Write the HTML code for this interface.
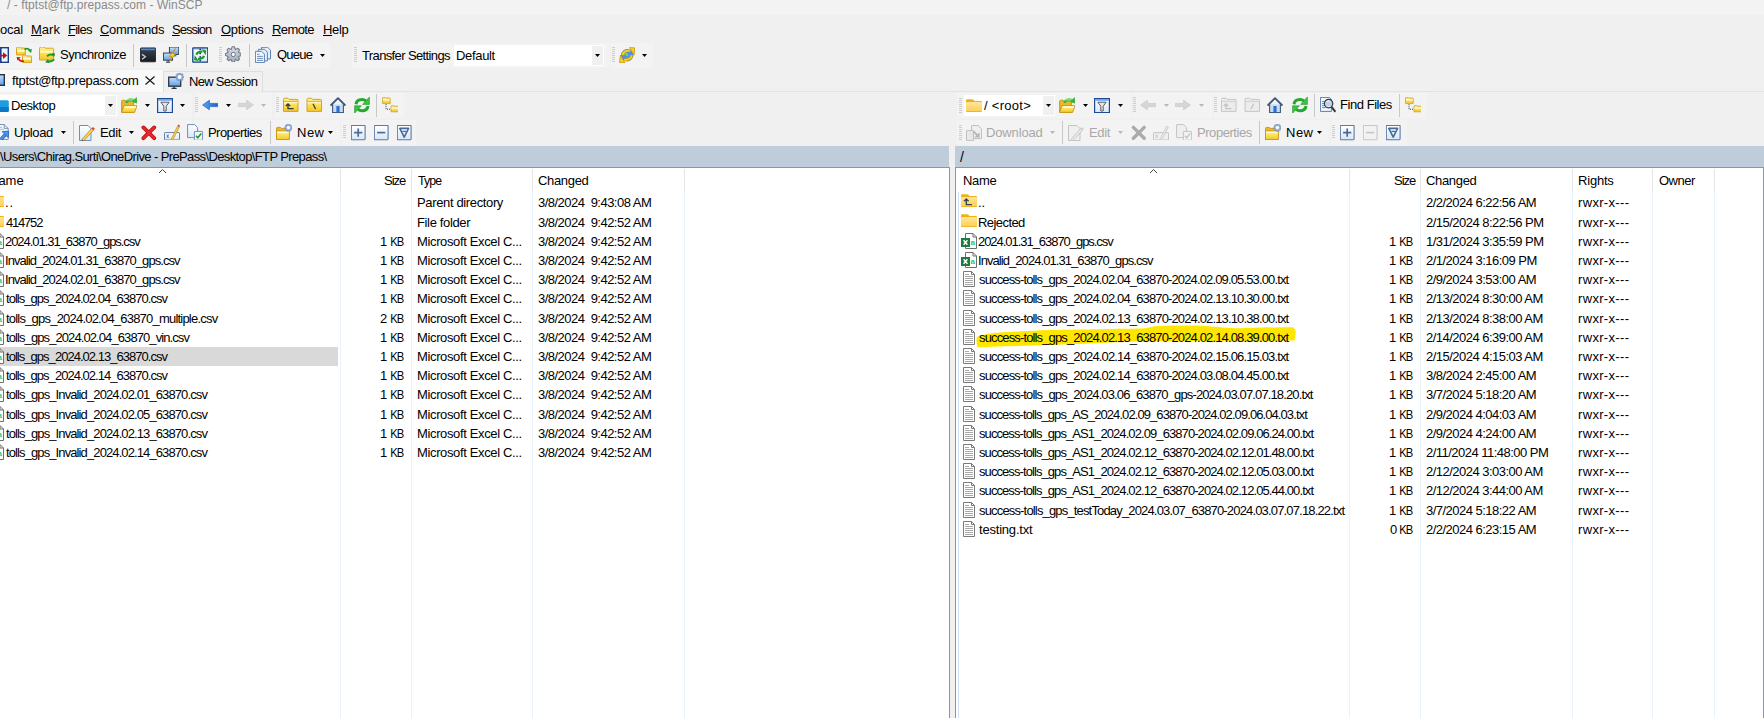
<!DOCTYPE html>
<html><head><meta charset="utf-8"><title>WinSCP</title>
<style>
html,body{margin:0;padding:0;width:1764px;height:718px;overflow:hidden;background:#f0f0f0}
body{position:relative;font-family:"Liberation Sans",sans-serif;font-size:13px;color:#000}
.b{position:absolute}
.i{position:absolute;overflow:visible}
.t{position:absolute;white-space:pre;line-height:14px;letter-spacing:-0.5px}
.r{text-align:right}
.title{color:#8a8a8a}
.menu u{text-decoration:underline;text-underline-offset:1px;text-decoration-thickness:1px}
.dis{color:#a8a8a8}
.nm{letter-spacing:-0.83px}
.dt{letter-spacing:-0.52px}
.ty{letter-spacing:-0.36px}
.rt{letter-spacing:0.33px}
.sz{letter-spacing:-1.4px}
.grip{background:repeating-linear-gradient(to bottom,#cdcdcd 0,#cdcdcd 1px,transparent 1px,transparent 2px)}
</style></head><body>
<svg width="0" height="0" style="position:absolute"><defs>
<linearGradient id="gFold" x1="0" y1="0" x2="0" y2="1"><stop offset="0" stop-color="#ffe69a"/><stop offset="1" stop-color="#fccf52"/></linearGradient>
<linearGradient id="gGold" x1="0" y1="0" x2="0" y2="1"><stop offset="0" stop-color="#fff3a0"/><stop offset="0.45" stop-color="#fde25a"/><stop offset="1" stop-color="#f3c72c"/></linearGradient>
<linearGradient id="gMon" x1="0" y1="0" x2="0" y2="1"><stop offset="0" stop-color="#c8e0fa"/><stop offset="1" stop-color="#5f9fea"/></linearGradient>
<linearGradient id="gTerm" x1="0" y1="0" x2="0" y2="1"><stop offset="0" stop-color="#3a434e"/><stop offset="1" stop-color="#181c22"/></linearGradient>
<linearGradient id="gBlue" x1="0" y1="0" x2="1" y2="0"><stop offset="0" stop-color="#5aa6f4"/><stop offset="1" stop-color="#1d5fc4"/></linearGradient>
<linearGradient id="gGreen" x1="0" y1="0" x2="0" y2="1"><stop offset="0" stop-color="#7ee07a"/><stop offset="1" stop-color="#1fa52a"/></linearGradient>
<linearGradient id="gPane" x1="0" y1="0" x2="0" y2="1"><stop offset="0" stop-color="#ffffff"/><stop offset="1" stop-color="#d9e7f7"/></linearGradient>
<linearGradient id="gGear" x1="0" y1="0" x2="0" y2="1"><stop offset="0" stop-color="#d4dae2"/><stop offset="1" stop-color="#a3acb8"/></linearGradient>

<symbol id="ic_folder" viewBox="0 0 16 16"><path d="M0 2.2Q0 1.2 1 1.2H6.2Q6.9 1.2 7.4 1.8L8.4 3H15Q16 3 16 4V13Q16 14 15 14H1Q0 14 0 13Z" fill="#f2b10d"/><rect x="0" y="4" width="16" height="10" rx="1" fill="url(#gFold)"/><rect x="0.5" y="13" width="15" height="1" rx="0.5" fill="#f0b52a"/></symbol>
<symbol id="ic_folderup" viewBox="0 0 16 16"><path d="M0 2.2Q0 1.2 1 1.2H6.2Q6.9 1.2 7.4 1.8L8.4 3H15Q16 3 16 4V13Q16 14 15 14H1Q0 14 0 13Z" fill="#f2b10d"/><rect x="0" y="4" width="16" height="10" rx="1" fill="url(#gFold)"/><rect x="0.5" y="13" width="15" height="1" rx="0.5" fill="#f0b52a"/><path d="M3 8.2L5.3 6L7.6 8.2M5.3 6.5V11.6H11" stroke="#3a4455" stroke-width="1.4" fill="none"/></symbol>
<symbol id="ic_xls" viewBox="0 0 16 16"><path d="M4.5 0.5h7.5l3.5 3.5v11.5h-11z" fill="#fff" stroke="#6e6e6e"/><path d="M12 0.5v3.5h3.5" fill="none" stroke="#6e6e6e"/><text x="9.4" y="12" font-family="Liberation Sans" font-size="8" font-weight="bold" fill="#2cc46e">a</text><rect x="0" y="5" width="9" height="9" fill="#1e7a43"/><path d="M2.6 7.2l3.8 4.6M6.4 7.2l-3.8 4.6" stroke="#fff" stroke-width="1.4"/></symbol>
<symbol id="ic_lcsv" viewBox="0 0 16 16"><path d="M4.5 0.5h7.5l3.5 3.5v11.5h-11z" fill="#fff" stroke="#6e6e6e"/><path d="M12 0.5v3.5h3.5" fill="none" stroke="#6e6e6e"/><text x="9.4" y="12" font-family="Liberation Sans" font-size="8" font-weight="bold" fill="#2cc46e">a</text><rect x="0" y="5" width="9" height="9" fill="#1e7a43"/></symbol>
<symbol id="ic_txt" viewBox="0 0 16 16"><path d="M2.5 0.5h8l3 3v12h-11z" fill="#fff" stroke="#7a7a7a"/><path d="M10.5 0.5v3h3" fill="none" stroke="#7a7a7a"/><path d="M4 3.5h4M4 5.5h8M4 7.5h8M4 9.5h8M4 11.5h8M4 13.5h8" stroke="#a8a8a8"/></symbol>

<symbol id="ic_cmp" viewBox="0 0 16 16"><rect x="-2" y="0.7" width="17.3" height="14.6" fill="#eef6fe" stroke="#1c3d85" stroke-width="1.4"/><rect x="7" y="0" width="1.6" height="16" fill="#1c3d85"/><path d="M0 8.6h11" stroke="#c0101e" stroke-width="1.6"/><path d="M10 5.2l4.3 3.4-4.3 3.4z" fill="#c0101e"/></symbol>
<symbol id="ic_synccmp" viewBox="0 0 16 16"><path d="M0.5 1.5Q0.5 0 2 0H3.5L4.5 1H8.5Q9.3 1 9.3 1.8V8H0.5Z" fill="url(#gGold)" stroke="#cf9d18" stroke-width="0.9"/><rect x="1.2" y="3.2" width="7.4" height="1.5" fill="#fffbd8"/><path d="M6.5 9.3Q6.5 8 8 8H9.5L10.5 9H14.8Q15.6 9 15.6 9.8V15.6H6.5Z" fill="url(#gGold)" stroke="#cf9d18" stroke-width="0.9"/><rect x="7.2" y="11" width="7.6" height="1.5" fill="#fffbd8"/><path d="M8.5 2.5Q11.5 0.5 13.8 3.2" stroke="#1f9a2a" stroke-width="1.7" fill="none"/><path d="M12 3.6L15.8 1.8L15.2 6Z" fill="#1f9a2a"/><path d="M8 14.2Q4 14.5 2.6 11.8" stroke="#d81818" stroke-width="1.7" fill="none"/><path d="M0.6 10L4.6 10.2L1.4 13.4Z" fill="#d81818"/></symbol>
<symbol id="ic_sync" viewBox="0 0 16 16"><path d="M0.5 1.5Q0.5 0 2 0H5L6.2 1.2H13.6Q14.6 1.2 14.6 2.2V13H0.5Z" fill="url(#gGold)" stroke="#cf9d18" stroke-width="0.9"/><rect x="1.2" y="4" width="12.6" height="1.6" fill="#fffbd8"/><path d="M8 9.2Q11 6.3 14.6 8.2" stroke="#1f9a2a" stroke-width="1.9" fill="none"/><path d="M13 6L17 6.6L14.6 10.2Z" fill="#1f9a2a"/><path d="M15.2 12.4Q12.4 15.6 8.6 14" stroke="#1f9a2a" stroke-width="1.9" fill="none"/><path d="M10.4 16L6.2 15.4L8.6 12Z" fill="#1f9a2a"/></symbol>
<symbol id="ic_term" viewBox="0 0 16 16"><rect x="0.5" y="0.9" width="15.2" height="13.9" rx="0.8" fill="url(#gTerm)" stroke="#15181c" stroke-width="0.8"/><rect x="1.2" y="1.6" width="13.8" height="1.6" fill="#3f90ea"/><path d="M2 7.4l3.4 2.4L2 12.2" stroke="#c9ced4" stroke-width="1.3" fill="none"/></symbol>
<symbol id="ic_putty" viewBox="0 0 16 16"><rect x="6.4" y="0" width="9.4" height="7.4" fill="url(#gMon)" stroke="#2c333d" stroke-width="0.9"/><path d="M10 8.8h3.4" stroke="#2c333d" stroke-width="1"/><rect x="0.4" y="6" width="9.2" height="7.2" fill="url(#gMon)" stroke="#2c333d" stroke-width="0.9"/><path d="M3 15.2h4.2M5.1 13.2v2" stroke="#2c333d" stroke-width="1"/><path d="M12.4 1.4L6.2 9.4H9L6.4 14.6L12.6 6.8H9.8Z" fill="#f6d23a" stroke="#b88c12" stroke-width="0.7"/></symbol>
<symbol id="ic_syncbrowse" viewBox="0 0 16 16"><rect x="0.8" y="1" width="15" height="14.2" rx="0.5" fill="url(#gPane)" stroke="#15428b" stroke-width="1.3"/><path d="M1.5 2.2H15" stroke="#9cc0ef" stroke-width="1"/><circle cx="8.2" cy="2.4" r="0.9" fill="#15428b"/><circle cx="8.2" cy="6.4" r="0.9" fill="#15428b"/><circle cx="8.2" cy="10" r="0.9" fill="#15428b"/><circle cx="8.2" cy="13.6" r="0.9" fill="#15428b"/><path d="M4.4 7.6Q5.6 4.4 10.4 4.6" stroke="#1e9a28" stroke-width="2.2" fill="none"/><path d="M9.6 2.2L14.4 3.4L13.6 8.2Z" fill="#1e9a28"/><path d="M12 8.8Q10.8 12 6 11.8" stroke="#1e9a28" stroke-width="2.2" fill="none"/><path d="M6.8 14.2L2 13L2.8 8.2Z" fill="#1e9a28"/></symbol>
<symbol id="ic_gear" viewBox="0 0 16 16"><path d="M6.29 3.27 L7.21 0.78 L9.39 0.78 L10.31 3.27 L10.58 3.38 L12.99 2.27 L14.53 3.81 L13.42 6.22 L13.53 6.49 L16.02 7.41 L16.02 9.59 L13.53 10.51 L13.42 10.78 L14.53 13.19 L12.99 14.73 L10.58 13.62 L10.31 13.73 L9.39 16.22 L7.21 16.22 L6.29 13.73 L6.02 13.62 L3.61 14.73 L2.07 13.19 L3.18 10.78 L3.07 10.51 L0.58 9.59 L0.58 7.41 L3.07 6.49 L3.18 6.22 L2.07 3.81 L3.61 2.27 L6.02 3.38Z" fill="url(#gGear)" stroke="#717c8a" stroke-width="1.1" stroke-linejoin="round"/><circle cx="8.3" cy="8.5" r="2.1" fill="#fbfbfb" stroke="#6a7482" stroke-width="1"/></symbol>
<symbol id="ic_queue" viewBox="0 0 16 16"><path d="M6.5 0.3h6.2l2.8 2.8v8.8h-9z" fill="#e7eef8" stroke="#5b82b5"/><path d="M3.4 2.3h6.2l2.8 2.8v8.8h-9z" fill="#e7eef8" stroke="#5b82b5"/><path d="M0.4 4.3h6.2l2.8 2.8v8.5h-9z" fill="#f3f7fc" stroke="#5b82b5"/><path d="M2 7.2h2.5M2 9.4h5.8M2 11.4h5.8M2 13.4h5.8" stroke="#5b82b5" stroke-width="0.9"/></symbol>
<symbol id="ic_web" viewBox="0 0 16 16"><circle cx="8.2" cy="8.2" r="5.8" fill="#4896ea" stroke="#2a74c4" stroke-width="0.6"/><path d="M4.6 7.6Q5.8 6 7.6 7Q8.4 7.8 7.8 9.2M10.6 9.4Q12 8.8 12.6 10.6" stroke="#74d36a" stroke-width="1.9" fill="none"/><g id="wArr"><path d="M3.6 8Q4.6 3.2 11.2 3.6" stroke="#c8920a" stroke-width="2.8" fill="none"/><path d="M3.6 8Q4.6 3.2 11.2 3.6" stroke="#f8d030" stroke-width="1.7" fill="none"/><path d="M10.6 0.6L15.8 0.9L15 8.2Z" fill="#f8d030" stroke="#c8920a" stroke-width="0.8" stroke-linejoin="round"/></g><use href="#wArr" transform="rotate(180 8.2 8.2)"/></symbol>
<symbol id="ic_monitor" viewBox="0 0 16 16"><rect x="0.7" y="1.7" width="14.6" height="10.6" fill="url(#gMon)" stroke="#2a3240" stroke-width="1.4"/><path d="M5.5 14.6h5M8 12.5v2" stroke="#2a3240" stroke-width="1.4"/></symbol>
<symbol id="ic_newsess" viewBox="0 0 16 16"><rect x="0.7" y="4.2" width="12" height="9" fill="url(#gMon)" stroke="#2a3240" stroke-width="1.3"/><path d="M3.6 15.4h5M6.1 13.4v2" stroke="#2a3240" stroke-width="1.3"/><g transform="translate(11.6 4)"><path d="M-0.8-4H0.8L1.2-2.4 2.6-3.4 3.6-2.2 2.6-0.9 4 -0.5V1L2.6 1.3 3.4 2.8 2.2 3.8 1 2.6 0.8 4H-0.8L-1.1 2.6-2.4 3.6-3.6 2.4-2.6 1.2-4 0.8V-0.8L-2.6-1.1-3.4-2.4-2.2-3.6-1.1-2.6Z" fill="#8eaad0" stroke="#5f7fae" stroke-width="0.5"/><circle r="2" fill="#fff"/></g></symbol>
<symbol id="ic_desktop" viewBox="0 0 16 16"><rect x="3.8" y="3.3" width="12" height="11.6" rx="1.6" fill="#1e9ce0"/><rect x="3.8" y="10" width="12" height="4.9" rx="1" fill="#0d79c6"/></symbol>
<symbol id="ic_open" viewBox="0 0 16 16"><path d="M0.6 4.2Q0.6 3.2 1.6 3.2H4L5 4.2H12.6V15.2H0.6Z" fill="#e9b72c" stroke="#c99212" stroke-width="0.9"/><path d="M3 8.6H16L13.6 15.4H0.6Z" fill="url(#gGold)" stroke="#c99212" stroke-width="0.9"/><rect x="3.6" y="9.2" width="11.4" height="1.6" fill="#fffbd8"/><path d="M5 5.6Q8.5 0.8 13.2 3.2" stroke="url(#gGreen)" stroke-width="2.6" fill="none"/><path d="M15.8 0L16 6.6L10.8 4.8Z" fill="#36b23a"/></symbol>
<symbol id="ic_filter" viewBox="0 0 16 16"><rect x="0.6" y="1.6" width="14.8" height="14" fill="url(#gPane)" stroke="#1c4a94" stroke-width="1.2"/><rect x="1.2" y="2.2" width="13.6" height="1.5" fill="#5e96e0"/><path d="M3.8 5.2H12.2L9.2 9.2V14H6.8V9.2Z" fill="#e6e6e6" stroke="#5a5e64" stroke-width="1"/></symbol>
<symbol id="ic_back" viewBox="0 0 16 16"><path d="M0.6 8L7.4 3.2V6.4H15.8V9.6H7.4V12.8Z" fill="url(#gBlue)" stroke="#1f5fbf" stroke-width="0.7" stroke-linejoin="round"/></symbol>
<symbol id="ic_back_dis" viewBox="0 0 16 16"><path d="M0.6 8L7.4 3.2V6.4H15.8V9.6H7.4V12.8Z" fill="#d6d6d6" stroke="#cacaca" stroke-width="0.7" stroke-linejoin="round"/></symbol>
<symbol id="ic_fwd_dis" viewBox="0 0 16 16"><path d="M15.4 8L8.6 3.2V6.4H0.2V9.6H8.6V12.8Z" fill="#d6d6d6" stroke="#cacaca" stroke-width="0.7" stroke-linejoin="round"/></symbol>
<symbol id="ic_parent" viewBox="0 0 16 16"><path d="M0.5 2.5Q0.5 1.2 1.8 1.2H5L6.2 2.4H14Q15 2.4 15 3.4V14.4H0.5Z" fill="url(#gGold)" stroke="#cf9818" stroke-width="0.9"/><path d="M1 4.4H14.5" stroke="#cf9818" stroke-width="0.8"/><rect x="1" y="4.9" width="13.5" height="1.4" fill="#fff6c0"/><path d="M2.8 9L5 7L7.2 9M5 7.6V11.6H10.6" stroke="#2e3a4a" stroke-width="1.3" fill="none"/></symbol>
<symbol id="ic_parent_dis" viewBox="0 0 16 16"><path d="M0.5 2.5Q0.5 1.2 1.8 1.2H5L6.2 2.4H14Q15 2.4 15 3.4V14.4H0.5Z" fill="#ececec" stroke="#c2c2c2" stroke-width="0.9"/><path d="M1 4.4H14.5" stroke="#c8c8c8" stroke-width="0.8"/><path d="M2.8 9L5 7L7.2 9M5 7.6V11.6H10.6" stroke="#c4c4c4" stroke-width="1.3" fill="none"/></symbol>
<symbol id="ic_root" viewBox="0 0 16 16"><path d="M1 2.5Q1 1.2 2.3 1.2H5.5L6.7 2.4H14.5Q15.5 2.4 15.5 3.4V14.4H1Z" fill="url(#gGold)" stroke="#cf9818" stroke-width="0.9"/><path d="M1.5 4.4H15" stroke="#cf9818" stroke-width="0.8"/><rect x="1.5" y="4.9" width="13.5" height="1.4" fill="#fff6c0"/><path d="M7 6.8L9.6 12" stroke="#3a3f46" stroke-width="1.3"/></symbol>
<symbol id="ic_root_dis" viewBox="0 0 16 16"><path d="M1 2.5Q1 1.2 2.3 1.2H5.5L6.7 2.4H14.5Q15.5 2.4 15.5 3.4V14.4H1Z" fill="#ececec" stroke="#c2c2c2" stroke-width="0.9"/><path d="M1.5 4.4H15" stroke="#c8c8c8" stroke-width="0.8"/><path d="M9.6 6.8L7 12" stroke="#c4c4c4" stroke-width="1.3"/></symbol>
<symbol id="ic_home" viewBox="0 0 16 16"><path d="M2.6 7.4V15.6H13.4V7.4" fill="#c9dcf2" stroke="#3f5878" stroke-width="1.1"/><path d="M0.6 8.6L8 1.2L15.4 8.6" stroke="#3f5878" stroke-width="1.9" fill="none" stroke-linejoin="round"/><rect x="6.4" y="9" width="3.2" height="6.4" fill="#2b6fd6"/></symbol>
<symbol id="ic_refresh" viewBox="0 0 16 16"><path d="M2 7.2Q2.6 2.4 8 2.4Q10.4 2.4 12 4" stroke="#24a82e" stroke-width="3" fill="none"/><path d="M15.4 0V7.4H8.6Z" fill="#3cc440" stroke="#1d9426" stroke-width="0.6"/><path d="M14 9Q13.4 13.8 8 13.8Q5.6 13.8 4 12.2" stroke="#24a82e" stroke-width="3" fill="none"/><path d="M0.6 16.2V8.8H7.4Z" fill="#3cc440" stroke="#1d9426" stroke-width="0.6"/></symbol>
<symbol id="ic_tree" viewBox="0 0 16 16"><path d="M0.6 1Q0.6 0.4 1.2 0.4H3.2L3.8 1H7.6Q8.2 1 8.2 1.6V6.6H0.6Z" fill="url(#gGold)" stroke="#c9a020" stroke-width="0.8"/><rect x="1" y="2.4" width="6.8" height="1.2" fill="#fffbd8"/><path d="M9 9.2Q9 8.6 9.6 8.6H11.6L12.2 9.2H16Q16.6 9.2 16.6 9.8V14.8H9Z" fill="url(#gGold)" stroke="#c9a020" stroke-width="0.8"/><rect x="9.4" y="10.6" width="6.8" height="1.2" fill="#fffbd8"/><path d="M4 7.2V12.2H9" stroke="#2a2a2a" stroke-width="0.9" stroke-dasharray="1 1" fill="none"/></symbol>
<symbol id="ic_upload" viewBox="0 0 16 16"><path d="M3.4 0.5H11.2L15.2 4.4V15.5H3.4Z" fill="#f2f6fb" stroke="#7b96b8"/><path d="M11.2 0.5V4.4H15.2" fill="none" stroke="#7b96b8"/><path d="M5 3.4h4M5 5.4h6" stroke="#a9bbd2" stroke-width="0.9"/><path d="M6.8 16.4L12.4 10.8" stroke="#1c5fbf" stroke-width="3.4"/><path d="M6.8 16.4L12.4 10.8" stroke="#4a94ec" stroke-width="2"/><path d="M9.2 7.6L15.6 7.2L15.2 13.6Z" fill="#4a94ec" stroke="#1c5fbf" stroke-width="0.8" stroke-linejoin="round"/></symbol>
<symbol id="ic_edit" viewBox="0 0 16 16"><path d="M0.5 0.5H9L12 3.5V15.5H0.5Z" fill="url(#gPane)" stroke="#6f8fb8"/><path d="M3.2 14.2L12.6 3.4L14.6 5.2L5 15.6L2.8 16Z" fill="#f7cf48" stroke="#b8841a" stroke-width="0.7"/><path d="M12.6 3.4L13.8 2L15.8 3.8L14.6 5.2Z" fill="#e03a3a"/><path d="M2.8 16L3.4 14.4L4.4 15.4Z" fill="#333"/></symbol>
<symbol id="ic_edit_dis" viewBox="0 0 16 16"><path d="M0.5 0.5H9L12 3.5V15.5H0.5Z" fill="#efefef" stroke="#c4c4c4"/><path d="M3.2 14.2L12.6 3.4L14.6 5.2L5 15.6L2.8 16Z" fill="#e6e6e6" stroke="#bdbdbd" stroke-width="0.7"/><path d="M12.6 3.4L13.8 2L15.8 3.8L14.6 5.2Z" fill="#d0d0d0"/></symbol>
<symbol id="ic_del" viewBox="0 0 16 16"><path d="M2.4 2.4L13.2 13.2M13.2 2.4L2.4 13.2" stroke="#b40e0e" stroke-width="3.8" stroke-linecap="round"/><path d="M2.4 2.4L13.2 13.2M13.2 2.4L2.4 13.2" stroke="#e82828" stroke-width="2.4" stroke-linecap="round"/></symbol>
<symbol id="ic_del_dis" viewBox="0 0 16 16"><path d="M2.4 2.4L13.2 13.2M13.2 2.4L2.4 13.2" stroke="#ababab" stroke-width="3.4" stroke-linecap="round"/></symbol>
<symbol id="ic_rename" viewBox="0 0 16 16"><rect x="0.5" y="8.6" width="15" height="7.4" rx="0.6" fill="url(#gPane)" stroke="#5b7fae"/><path d="M2.8 10.6L4.6 13.8M4.6 10.6L2.8 13.8" stroke="#4a6a9a" stroke-width="0.9"/><path d="M7.2 15L13.6 2L15.4 3L9 15.6L7 16.4Z" fill="#f7cf48" stroke="#b8841a" stroke-width="0.6"/><path d="M13.6 2L14.2 0.6L16 1.6L15.4 3Z" fill="#e03a3a"/></symbol>
<symbol id="ic_rename_dis" viewBox="0 0 16 16"><rect x="0.5" y="8.6" width="15" height="7.4" rx="0.6" fill="#efefef" stroke="#c4c4c4"/><path d="M2.8 10.6L4.6 13.8M4.6 10.6L2.8 13.8" stroke="#c4c4c4" stroke-width="0.9"/><path d="M7.2 15L13.6 2L15.4 3L9 15.6L7 16.4Z" fill="#e8e8e8" stroke="#c0c0c0" stroke-width="0.6"/></symbol>
<symbol id="ic_props" viewBox="0 0 16 16"><path d="M0.6 0.6H7.6L10.6 3.6V13.6H0.6Z" fill="url(#gPane)" stroke="#6f8fb8"/><rect x="7.4" y="7.4" width="8.2" height="8.8" rx="0.5" fill="#f4f8fd" stroke="#6f8fb8"/><path d="M9 11.8L10.8 13.8L14.2 9.4" stroke="#1aa02a" stroke-width="1.6" fill="none"/></symbol>
<symbol id="ic_props_dis" viewBox="0 0 16 16"><path d="M0.6 0.6H7.6L10.6 3.6V13.6H0.6Z" fill="#efefef" stroke="#c4c4c4"/><rect x="7.4" y="7.4" width="8.2" height="8.8" rx="0.5" fill="#f2f2f2" stroke="#c4c4c4"/><path d="M9 11.8L10.8 13.8L14.2 9.4" stroke="#c4c4c4" stroke-width="1.4" fill="none"/></symbol>
<symbol id="ic_new" viewBox="0 0 16 16"><path d="M0.5 4.4Q0.5 3.4 1.5 3.4H4.4L5.4 4.4H12.6V15.6H0.5Z" fill="#e9b72c" stroke="#c99212" stroke-width="0.9"/><path d="M0.5 7H13.4V15.6H0.5Z" fill="url(#gGold)" stroke="#c99212" stroke-width="0.9"/><rect x="1" y="7.6" width="12" height="1.4" fill="#fffbd8"/><g transform="translate(12.4 3.6)"><path d="M-0.8-3.6H0.8L1.1-2.3 2.3-3 3.3-2 2.6-0.8 3.6-0.5V0.9L2.5 1.2 3.1 2.5 2 3.4 1 2.6 0.8 3.8H-0.8L-1 2.6-2.2 3.3-3.2 2.2-2.5 1.1-3.6 0.8V-0.8L-2.5-1.1-3.1-2.3-2-3.2-1-2.5Z" fill="#9ab4d8" stroke="#6483b0" stroke-width="0.5"/><circle r="1.7" fill="#fff"/></g></symbol>
<symbol id="ic_plus" viewBox="0 0 16 16"><rect x="0.3" y="0.5" width="13.8" height="14.2" rx="0.6" fill="url(#gPane)" stroke="#5a7aa8" stroke-width="1.1"/><path d="M7.2 3.6V11.8M3.1 7.6H11.3" stroke="#4a6a9a" stroke-width="1.7"/></symbol>
<symbol id="ic_minus" viewBox="0 0 16 16"><rect x="0.3" y="0.5" width="13.8" height="14.2" rx="0.6" fill="url(#gPane)" stroke="#5a7aa8" stroke-width="1.1"/><path d="M3.1 7.6H11.3" stroke="#4a6a9a" stroke-width="1.7"/></symbol>
<symbol id="ic_minus_dis" viewBox="0 0 16 16"><rect x="0.3" y="0.5" width="13.8" height="14.2" rx="0.6" fill="#f2f2f2" stroke="#c6c6c6" stroke-width="1.1"/><path d="M3.1 7.6H11.3" stroke="#c6c6c6" stroke-width="1.7"/></symbol>
<symbol id="ic_selfilter" viewBox="0 0 16 16"><rect x="0.3" y="0.5" width="13.8" height="14.2" rx="0.6" fill="url(#gPane)" stroke="#5a7aa8" stroke-width="1.1"/><path d="M2.8 3.4H11.6L7.2 12.2Z" fill="none" stroke="#4a6a9a" stroke-width="1.6" stroke-linejoin="round"/><path d="M5.4 6.4H9" stroke="#4a6a9a" stroke-width="1.2"/></symbol>
<symbol id="ic_find" viewBox="0 0 16 16"><path d="M0.4 0.4H9.4L11.4 2.4V14.4H0.4Z" fill="#f2f6fb" stroke="#5b7fae"/><path d="M2 4.6h3.6M2 6.6h3.6M2 8.6h3.6M2 10.6h3.6" stroke="#5b7fae" stroke-width="0.9"/><circle cx="8.6" cy="6.6" r="4.2" fill="#dce9f8" fill-opacity="0.85" stroke="#2e3846" stroke-width="1.2"/><path d="M5.6 6h6M5.6 8h6" stroke="#8fa6c4" stroke-width="0.7"/><path d="M11.6 9.8L15.4 14.8" stroke="#2e3846" stroke-width="2"/></symbol>
<symbol id="ic_download_dis" viewBox="0 0 16 16"><path d="M5.6 0.5H12.2L15.5 3.8V13.6H5.6Z" fill="#efefef" stroke="#c0c0c0"/><path d="M0.5 5.6H7.4V15.6H0.5Z" fill="#e8e8e8" stroke="#c0c0c0"/><path d="M7.4 6.4L12.4 11.4" stroke="#b8b8b8" stroke-width="2"/><path d="M13.6 7.2V12.6H8.2Z" fill="#b8b8b8"/></symbol>

</defs></svg>
<div class="b" style="left:0px;top:0px;width:1764px;height:15px;background:#f3f3f3"></div>
<div class="b" style="left:0px;top:15px;width:1764px;height:131px;background:#f0f0f0"></div>
<div class="b" style="left:0px;top:43px;width:330px;height:25px;background:#f3f3f3"></div>
<div class="b" style="left:352px;top:43px;width:257px;height:25px;background:#f3f3f3"></div>
<div class="b" style="left:611px;top:43px;width:42px;height:25px;background:#f3f3f3"></div>
<div class="b" style="left:0px;top:93px;width:192px;height:25px;background:#f3f3f3"></div>
<div class="b" style="left:195px;top:93px;width:77px;height:25px;background:#f3f3f3"></div>
<div class="b" style="left:275px;top:93px;width:129px;height:25px;background:#f3f3f3"></div>
<div class="b" style="left:0px;top:120px;width:340px;height:25px;background:#f3f3f3"></div>
<div class="b" style="left:342px;top:120px;width:74px;height:25px;background:#f3f3f3"></div>
<div class="b" style="left:957px;top:93px;width:174px;height:25px;background:#f3f3f3"></div>
<div class="b" style="left:1133px;top:93px;width:79px;height:25px;background:#f3f3f3"></div>
<div class="b" style="left:1214px;top:93px;width:212px;height:25px;background:#f3f3f3"></div>
<div class="b" style="left:957px;top:120px;width:372px;height:25px;background:#f3f3f3"></div>
<div class="b" style="left:1331px;top:120px;width:76px;height:25px;background:#f3f3f3"></div>
<div class="t title" style="left:7px;top:-2px;font-size:12px;letter-spacing:0.059px;">/ - ftptst@ftp.prepass.com - WinSCP</div>
<div class="t" style="left:-7px;top:23px;font-size:13px;letter-spacing:-0.250px;">Local</div>
<div class="t menu" style="left:31px;top:23px;font-size:13px;letter-spacing:0.000px;"><u>M</u>ark</div>
<div class="t menu" style="left:68px;top:23px;font-size:13px;letter-spacing:-0.750px;"><u>F</u>iles</div>
<div class="t menu" style="left:100px;top:23px;font-size:13px;letter-spacing:-0.286px;"><u>C</u>ommands</div>
<div class="t menu" style="left:172px;top:23px;font-size:13px;letter-spacing:-1.000px;"><u>S</u>ession</div>
<div class="t menu" style="left:221px;top:23px;font-size:13px;letter-spacing:-0.333px;"><u>O</u>ptions</div>
<div class="t menu" style="left:272px;top:23px;font-size:13px;letter-spacing:-0.600px;"><u>R</u>emote</div>
<div class="t menu" style="left:323px;top:23px;font-size:13px;letter-spacing:-0.333px;"><u>H</u>elp</div>
<svg class="i" style="left:-7px;top:47px;" width="16" height="16" viewBox="0 0 16 16"><use href="#ic_cmp"/></svg>
<svg class="i" style="left:16px;top:47px;" width="16" height="16" viewBox="0 0 16 16"><use href="#ic_synccmp"/></svg>
<svg class="i" style="left:39px;top:47px;" width="16" height="16" viewBox="0 0 16 16"><use href="#ic_sync"/></svg>
<div class="t" style="left:60px;top:48px;font-size:13px;letter-spacing:-0.500px;">Synchronize</div>
<div class="b" style="left:133px;top:44px;width:1px;height:23px;background:#c8c8c8"></div>
<svg class="i" style="left:140px;top:47px;" width="16" height="16" viewBox="0 0 16 16"><use href="#ic_term"/></svg>
<svg class="i" style="left:163px;top:47px;" width="16" height="16" viewBox="0 0 16 16"><use href="#ic_putty"/></svg>
<div class="b" style="left:186px;top:44px;width:1px;height:23px;background:#c8c8c8"></div>
<svg class="i" style="left:192px;top:47px;" width="16" height="16" viewBox="0 0 16 16"><use href="#ic_syncbrowse"/></svg>
<div class="b grip" style="left:219px;top:47px;width:3px;height:16px"></div>
<svg class="i" style="left:225px;top:46px;" width="16" height="16" viewBox="0 0 16 16"><use href="#ic_gear"/></svg>
<div class="b" style="left:249px;top:44px;width:1px;height:23px;background:#c8c8c8"></div>
<svg class="i" style="left:255px;top:47px;" width="16" height="16" viewBox="0 0 16 16"><use href="#ic_queue"/></svg>
<div class="t" style="left:277px;top:48px;font-size:13px;letter-spacing:-0.750px;">Queue</div>
<svg class="i" style="left:320px;top:54px" width="5" height="3" viewBox="0 0 5 3"><path d="M0 0H5L2.5 3Z" fill="#000"/></svg>
<div class="b grip" style="left:354px;top:47px;width:3px;height:16px"></div>
<div class="t" style="left:362px;top:49px;font-size:13px;letter-spacing:-0.625px;">Transfer Settings</div>
<div class="b" style="left:454px;top:45px;width:150px;height:21px;background:#fff"></div>
<div class="b" style="left:592px;top:46px;width:11px;height:19px;background:#f0f0f0"></div>
<div class="t" style="left:456px;top:49px;font-size:13px;letter-spacing:-0.333px;">Default</div>
<svg class="i" style="left:595px;top:54px" width="5" height="3" viewBox="0 0 5 3"><path d="M0 0H5L2.5 3Z" fill="#000"/></svg>
<div class="b grip" style="left:612px;top:47px;width:3px;height:16px"></div>
<svg class="i" style="left:619px;top:47px;" width="16" height="16" viewBox="0 0 16 16"><use href="#ic_web"/></svg>
<svg class="i" style="left:642px;top:54px" width="5" height="3" viewBox="0 0 5 3"><path d="M0 0H5L2.5 3Z" fill="#000"/></svg>
<div class="b" style="left:0px;top:70px;width:163px;height:22px;background:#f9f9f9"></div>
<div class="b" style="left:163px;top:71px;width:100px;height:21px;background:#f0f0f0;border:1px solid #dedede;border-bottom:none;box-sizing:border-box"></div>
<svg class="i" style="left:-11px;top:73px;" width="16" height="16" viewBox="0 0 16 16"><use href="#ic_monitor"/></svg>
<div class="t" style="left:12px;top:74px;font-size:13px;letter-spacing:-0.333px;">ftptst@ftp.prepass.com</div>
<svg class="i" style="left:145px;top:76px" width="10" height="9" viewBox="0 0 10 9"><path d="M0.5 0.5L9.5 8.5M9.5 0.5L0.5 8.5" stroke="#1a1a1a" stroke-width="1.2"/></svg>
<svg class="i" style="left:168px;top:73px;" width="16" height="16" viewBox="0 0 16 16"><use href="#ic_newsess"/></svg>
<div class="t" style="left:189px;top:75px;font-size:13px;letter-spacing:-0.700px;">New Session</div>
<div class="b" style="left:263px;top:91px;width:1501px;height:1px;background:#e3e3e3"></div>
<div class="b" style="left:0px;top:95px;width:117px;height:21px;background:#fff"></div>
<div class="b" style="left:105px;top:96px;width:11px;height:19px;background:#f0f0f0"></div>
<svg class="i" style="left:-7px;top:97px;" width="16" height="16" viewBox="0 0 16 16"><use href="#ic_desktop"/></svg>
<div class="t" style="left:11px;top:99px;font-size:13px;letter-spacing:-0.500px;">Desktop</div>
<svg class="i" style="left:108px;top:104px" width="5" height="3" viewBox="0 0 5 3"><path d="M0 0H5L2.5 3Z" fill="#000"/></svg>
<svg class="i" style="left:121px;top:97px;" width="16" height="16" viewBox="0 0 16 16"><use href="#ic_open"/></svg>
<svg class="i" style="left:145px;top:104px" width="5" height="3" viewBox="0 0 5 3"><path d="M0 0H5L2.5 3Z" fill="#000"/></svg>
<svg class="i" style="left:157px;top:97px;" width="16" height="16" viewBox="0 0 16 16"><use href="#ic_filter"/></svg>
<svg class="i" style="left:180px;top:104px" width="5" height="3" viewBox="0 0 5 3"><path d="M0 0H5L2.5 3Z" fill="#000"/></svg>
<div class="b grip" style="left:195px;top:97px;width:3px;height:16px"></div>
<svg class="i" style="left:202px;top:97px;" width="16" height="16" viewBox="0 0 16 16"><use href="#ic_back"/></svg>
<svg class="i" style="left:226px;top:104px" width="5" height="3" viewBox="0 0 5 3"><path d="M0 0H5L2.5 3Z" fill="#000"/></svg>
<svg class="i" style="left:238px;top:97px;" width="16" height="16" viewBox="0 0 16 16"><use href="#ic_fwd_dis"/></svg>
<svg class="i" style="left:261px;top:104px" width="5" height="3" viewBox="0 0 5 3"><path d="M0 0H5L2.5 3Z" fill="#b8b8b8"/></svg>
<div class="b grip" style="left:276px;top:97px;width:3px;height:16px"></div>
<svg class="i" style="left:283px;top:97px;" width="16" height="16" viewBox="0 0 16 16"><use href="#ic_parent"/></svg>
<svg class="i" style="left:306px;top:97px;" width="16" height="16" viewBox="0 0 16 16"><use href="#ic_root"/></svg>
<svg class="i" style="left:330px;top:97px;" width="16" height="16" viewBox="0 0 16 16"><use href="#ic_home"/></svg>
<svg class="i" style="left:354px;top:97px;" width="16" height="16" viewBox="0 0 16 16"><use href="#ic_refresh"/></svg>
<div class="b" style="left:376px;top:94px;width:1px;height:23px;background:#c8c8c8"></div>
<svg class="i" style="left:382px;top:97px;" width="16" height="16" viewBox="0 0 16 16"><use href="#ic_tree"/></svg>
<svg class="i" style="left:-7px;top:124px;" width="16" height="16" viewBox="0 0 16 16"><use href="#ic_upload"/></svg>
<div class="t" style="left:14px;top:126px;font-size:13px;letter-spacing:-0.400px;">Upload</div>
<svg class="i" style="left:61px;top:131px" width="5" height="3" viewBox="0 0 5 3"><path d="M0 0H5L2.5 3Z" fill="#000"/></svg>
<div class="b" style="left:73px;top:121px;width:1px;height:23px;background:#c8c8c8"></div>
<svg class="i" style="left:79px;top:125px;" width="16" height="16" viewBox="0 0 16 16"><use href="#ic_edit"/></svg>
<div class="t" style="left:100px;top:126px;font-size:13px;letter-spacing:-0.333px;">Edit</div>
<svg class="i" style="left:129px;top:131px" width="5" height="3" viewBox="0 0 5 3"><path d="M0 0H5L2.5 3Z" fill="#000"/></svg>
<svg class="i" style="left:141px;top:125px;" width="16" height="16" viewBox="0 0 16 16"><use href="#ic_del"/></svg>
<svg class="i" style="left:164px;top:124px;" width="16" height="16" viewBox="0 0 16 16"><use href="#ic_rename"/></svg>
<svg class="i" style="left:187px;top:124px;" width="16" height="16" viewBox="0 0 16 16"><use href="#ic_props"/></svg>
<div class="t" style="left:208px;top:126px;font-size:13px;letter-spacing:-0.556px;">Properties</div>
<div class="b" style="left:270px;top:121px;width:1px;height:23px;background:#c8c8c8"></div>
<svg class="i" style="left:276px;top:124px;" width="16" height="16" viewBox="0 0 16 16"><use href="#ic_new"/></svg>
<div class="t" style="left:297px;top:126px;font-size:13px;letter-spacing:0.500px;">New</div>
<svg class="i" style="left:328px;top:131px" width="5" height="3" viewBox="0 0 5 3"><path d="M0 0H5L2.5 3Z" fill="#000"/></svg>
<div class="b grip" style="left:343px;top:125px;width:3px;height:14px"></div>
<svg class="i" style="left:351px;top:125px;" width="16" height="16" viewBox="0 0 16 16"><use href="#ic_plus"/></svg>
<svg class="i" style="left:374px;top:125px;" width="16" height="16" viewBox="0 0 16 16"><use href="#ic_minus"/></svg>
<svg class="i" style="left:397px;top:125px;" width="16" height="16" viewBox="0 0 16 16"><use href="#ic_selfilter"/></svg>
<div class="b grip" style="left:959px;top:98px;width:3px;height:16px"></div>
<div class="b" style="left:964px;top:95px;width:91px;height:21px;background:#fff"></div>
<div class="b" style="left:1043px;top:96px;width:11px;height:19px;background:#f0f0f0"></div>
<svg class="i" style="left:966px;top:98px;" width="16" height="16" viewBox="0 0 16 16"><use href="#ic_folder"/></svg>
<div class="t" style="left:984px;top:99px;font-size:13px;letter-spacing:0.286px;">/ &lt;root&gt;</div>
<svg class="i" style="left:1046px;top:104px" width="5" height="3" viewBox="0 0 5 3"><path d="M0 0H5L2.5 3Z" fill="#000"/></svg>
<svg class="i" style="left:1059px;top:97px;" width="16" height="16" viewBox="0 0 16 16"><use href="#ic_open"/></svg>
<svg class="i" style="left:1083px;top:104px" width="5" height="3" viewBox="0 0 5 3"><path d="M0 0H5L2.5 3Z" fill="#000"/></svg>
<svg class="i" style="left:1094px;top:97px;" width="16" height="16" viewBox="0 0 16 16"><use href="#ic_filter"/></svg>
<svg class="i" style="left:1118px;top:104px" width="5" height="3" viewBox="0 0 5 3"><path d="M0 0H5L2.5 3Z" fill="#000"/></svg>
<div class="b grip" style="left:1133px;top:97px;width:3px;height:16px"></div>
<svg class="i" style="left:1140px;top:97px;" width="16" height="16" viewBox="0 0 16 16"><use href="#ic_back_dis"/></svg>
<svg class="i" style="left:1164px;top:104px" width="5" height="3" viewBox="0 0 5 3"><path d="M0 0H5L2.5 3Z" fill="#b8b8b8"/></svg>
<svg class="i" style="left:1175px;top:97px;" width="16" height="16" viewBox="0 0 16 16"><use href="#ic_fwd_dis"/></svg>
<svg class="i" style="left:1199px;top:104px" width="5" height="3" viewBox="0 0 5 3"><path d="M0 0H5L2.5 3Z" fill="#b8b8b8"/></svg>
<div class="b grip" style="left:1214px;top:97px;width:3px;height:16px"></div>
<svg class="i" style="left:1221px;top:97px;" width="16" height="16" viewBox="0 0 16 16"><use href="#ic_parent_dis"/></svg>
<svg class="i" style="left:1244px;top:97px;" width="16" height="16" viewBox="0 0 16 16"><use href="#ic_root_dis"/></svg>
<svg class="i" style="left:1267px;top:97px;" width="16" height="16" viewBox="0 0 16 16"><use href="#ic_home"/></svg>
<svg class="i" style="left:1292px;top:97px;" width="16" height="16" viewBox="0 0 16 16"><use href="#ic_refresh"/></svg>
<div class="b" style="left:1314px;top:94px;width:1px;height:23px;background:#c8c8c8"></div>
<svg class="i" style="left:1320px;top:97px;" width="16" height="16" viewBox="0 0 16 16"><use href="#ic_find"/></svg>
<div class="t" style="left:1340px;top:98px;font-size:13px;letter-spacing:-0.444px;">Find Files</div>
<div class="b" style="left:1399px;top:94px;width:1px;height:23px;background:#c8c8c8"></div>
<svg class="i" style="left:1405px;top:97px;" width="16" height="16" viewBox="0 0 16 16"><use href="#ic_tree"/></svg>
<div class="b grip" style="left:959px;top:125px;width:3px;height:16px"></div>
<svg class="i" style="left:966px;top:125px;" width="16" height="16" viewBox="0 0 16 16"><use href="#ic_download_dis"/></svg>
<div class="t dis" style="left:986px;top:126px;font-size:13px;letter-spacing:-0.143px;">Download</div>
<svg class="i" style="left:1050px;top:131px" width="5" height="3" viewBox="0 0 5 3"><path d="M0 0H5L2.5 3Z" fill="#b8b8b8"/></svg>
<div class="b" style="left:1062px;top:121px;width:1px;height:23px;background:#c8c8c8"></div>
<svg class="i" style="left:1068px;top:125px;" width="16" height="16" viewBox="0 0 16 16"><use href="#ic_edit_dis"/></svg>
<div class="t dis" style="left:1089px;top:126px;font-size:13px;letter-spacing:-0.333px;">Edit</div>
<svg class="i" style="left:1118px;top:131px" width="5" height="3" viewBox="0 0 5 3"><path d="M0 0H5L2.5 3Z" fill="#b8b8b8"/></svg>
<svg class="i" style="left:1131px;top:125px;" width="16" height="16" viewBox="0 0 16 16"><use href="#ic_del_dis"/></svg>
<svg class="i" style="left:1153px;top:124px;" width="16" height="16" viewBox="0 0 16 16"><use href="#ic_rename_dis"/></svg>
<svg class="i" style="left:1176px;top:124px;" width="16" height="16" viewBox="0 0 16 16"><use href="#ic_props_dis"/></svg>
<div class="t dis" style="left:1197px;top:126px;font-size:13px;letter-spacing:-0.444px;">Properties</div>
<div class="b" style="left:1259px;top:121px;width:1px;height:23px;background:#c8c8c8"></div>
<svg class="i" style="left:1265px;top:124px;" width="16" height="16" viewBox="0 0 16 16"><use href="#ic_new"/></svg>
<div class="t" style="left:1286px;top:126px;font-size:13px;letter-spacing:0.500px;">New</div>
<svg class="i" style="left:1317px;top:131px" width="5" height="3" viewBox="0 0 5 3"><path d="M0 0H5L2.5 3Z" fill="#000"/></svg>
<div class="b grip" style="left:1332px;top:125px;width:3px;height:14px"></div>
<svg class="i" style="left:1340px;top:125px;" width="16" height="16" viewBox="0 0 16 16"><use href="#ic_plus"/></svg>
<svg class="i" style="left:1363px;top:125px;" width="16" height="16" viewBox="0 0 16 16"><use href="#ic_minus_dis"/></svg>
<svg class="i" style="left:1386px;top:125px;" width="16" height="16" viewBox="0 0 16 16"><use href="#ic_selfilter"/></svg>
<div class="b" style="left:0px;top:146px;width:949px;height:572px;background:#fff"></div>
<div class="b" style="left:0px;top:146px;width:949px;height:21px;background:#bfcddb"></div>
<div class="b" style="left:0px;top:167px;width:949px;height:1px;background:#8c96a0"></div>
<div class="b" style="left:949px;top:167px;width:1px;height:551px;background:#8c96a0"></div>
<div class="b" style="left:950px;top:146px;width:5px;height:572px;background:#f0f0f0"></div>
<div class="t" style="left:0px;top:150px;font-size:13px;letter-spacing:-0.621px;">\Users\Chirag.Surti\OneDrive - PrePass\Desktop\FTP Prepass\</div>
<div class="b" style="left:340px;top:169px;width:1px;height:23px;background:#e5e5e5"></div>
<div class="b" style="left:340px;top:192px;width:1px;height:526px;background:#e9f2fd"></div>
<div class="b" style="left:411px;top:169px;width:1px;height:23px;background:#e5e5e5"></div>
<div class="b" style="left:411px;top:192px;width:1px;height:526px;background:#e9f2fd"></div>
<div class="b" style="left:532px;top:169px;width:1px;height:23px;background:#e5e5e5"></div>
<div class="b" style="left:532px;top:192px;width:1px;height:526px;background:#e9f2fd"></div>
<div class="b" style="left:684px;top:169px;width:1px;height:23px;background:#e5e5e5"></div>
<div class="b" style="left:684px;top:192px;width:1px;height:526px;background:#e9f2fd"></div>
<div class="t" style="left:-11px;top:174px;font-size:13px;letter-spacing:0.000px;">Name</div>
<svg class="i" style="left:158px;top:168px" width="10" height="6" viewBox="0 0 10 6"><path d="M1 5L4.5 1.5L8 5" stroke="#444" stroke-width="1" fill="none"/></svg>
<div class="t" style="left:384px;top:174px;font-size:13px;letter-spacing:-1.000px;">Size</div>
<div class="t" style="left:418px;top:174px;font-size:13px;letter-spacing:-0.900px;transform:scaleX(0.9486);transform-origin:0px 0;">Type</div>
<div class="t" style="left:538px;top:174px;font-size:13px;letter-spacing:-0.333px;">Changed</div>
<svg class="i" style="left:-12px;top:193px;" width="16" height="16" viewBox="0 0 16 16"><use href="#ic_folder"/></svg>
<div class="t" style="left:5px;top:196px;font-size:13px;letter-spacing:1.000px;">..</div>
<div class="t ty" style="left:417px;top:196px;">Parent directory</div>
<div class="t dt" style="left:538px;top:196px;">3/8/2024  9:43:08 AM</div>
<svg class="i" style="left:-12px;top:213px;" width="16" height="16" viewBox="0 0 16 16"><use href="#ic_folder"/></svg>
<div class="t" style="left:6px;top:216px;font-size:13px;letter-spacing:-1.200px;">414752</div>
<div class="t ty" style="left:417px;top:216px;">File folder</div>
<div class="t dt" style="left:538px;top:216px;">3/8/2024  9:42:52 AM</div>
<svg class="i" style="left:-12px;top:233px;" width="16" height="16" viewBox="0 0 16 16"><use href="#ic_lcsv"/></svg>
<div class="t" style="left:5px;top:235px;font-size:13px;letter-spacing:-1.043px;">2024.01.31_63870_gps.csv</div>
<div class="t" style="left:380px;top:235px;font-size:13px;letter-spacing:-2.000px;">1</div>
<div class="t" style="left:390px;top:235px;font-size:13px;letter-spacing:-0.900px;transform:scaleX(0.8609);transform-origin:1px 0;">KB</div>
<div class="t ty" style="left:417px;top:235px;">Microsoft Excel C...</div>
<div class="t dt" style="left:538px;top:235px;">3/8/2024  9:42:52 AM</div>
<svg class="i" style="left:-12px;top:252px;" width="16" height="16" viewBox="0 0 16 16"><use href="#ic_lcsv"/></svg>
<div class="t" style="left:5px;top:254px;font-size:13px;letter-spacing:-0.935px;">Invalid_2024.01.31_63870_gps.csv</div>
<div class="t" style="left:380px;top:254px;font-size:13px;letter-spacing:-2.000px;">1</div>
<div class="t" style="left:390px;top:254px;font-size:13px;letter-spacing:-0.900px;transform:scaleX(0.8609);transform-origin:1px 0;">KB</div>
<div class="t ty" style="left:417px;top:254px;">Microsoft Excel C...</div>
<div class="t dt" style="left:538px;top:254px;">3/8/2024  9:42:52 AM</div>
<svg class="i" style="left:-12px;top:271px;" width="16" height="16" viewBox="0 0 16 16"><use href="#ic_lcsv"/></svg>
<div class="t" style="left:5px;top:273px;font-size:13px;letter-spacing:-0.935px;">Invalid_2024.02.01_63870_gps.csv</div>
<div class="t" style="left:380px;top:273px;font-size:13px;letter-spacing:-2.000px;">1</div>
<div class="t" style="left:390px;top:273px;font-size:13px;letter-spacing:-0.900px;transform:scaleX(0.8609);transform-origin:1px 0;">KB</div>
<div class="t ty" style="left:417px;top:273px;">Microsoft Excel C...</div>
<div class="t dt" style="left:538px;top:273px;">3/8/2024  9:42:52 AM</div>
<svg class="i" style="left:-12px;top:290px;" width="16" height="16" viewBox="0 0 16 16"><use href="#ic_lcsv"/></svg>
<div class="t" style="left:6px;top:292px;font-size:13px;letter-spacing:-0.966px;">tolls_gps_2024.02.04_63870.csv</div>
<div class="t" style="left:380px;top:292px;font-size:13px;letter-spacing:-2.000px;">1</div>
<div class="t" style="left:390px;top:292px;font-size:13px;letter-spacing:-0.900px;transform:scaleX(0.8609);transform-origin:1px 0;">KB</div>
<div class="t ty" style="left:417px;top:292px;">Microsoft Excel C...</div>
<div class="t dt" style="left:538px;top:292px;">3/8/2024  9:42:52 AM</div>
<svg class="i" style="left:-12px;top:310px;" width="16" height="16" viewBox="0 0 16 16"><use href="#ic_lcsv"/></svg>
<div class="t" style="left:6px;top:312px;font-size:13px;letter-spacing:-0.789px;">tolls_gps_2024.02.04_63870_multiple.csv</div>
<div class="t" style="left:380px;top:312px;font-size:13px;letter-spacing:-1.000px;">2</div>
<div class="t" style="left:390px;top:312px;font-size:13px;letter-spacing:-0.900px;transform:scaleX(0.8609);transform-origin:1px 0;">KB</div>
<div class="t ty" style="left:417px;top:312px;">Microsoft Excel C...</div>
<div class="t dt" style="left:538px;top:312px;">3/8/2024  9:42:52 AM</div>
<svg class="i" style="left:-12px;top:329px;" width="16" height="16" viewBox="0 0 16 16"><use href="#ic_lcsv"/></svg>
<div class="t" style="left:6px;top:331px;font-size:13px;letter-spacing:-0.909px;">tolls_gps_2024.02.04_63870_vin.csv</div>
<div class="t" style="left:380px;top:331px;font-size:13px;letter-spacing:-2.000px;">1</div>
<div class="t" style="left:390px;top:331px;font-size:13px;letter-spacing:-0.900px;transform:scaleX(0.8609);transform-origin:1px 0;">KB</div>
<div class="t ty" style="left:417px;top:331px;">Microsoft Excel C...</div>
<div class="t dt" style="left:538px;top:331px;">3/8/2024  9:42:52 AM</div>
<div class="b" style="left:0px;top:347px;width:338px;height:19px;background:#d9d9d9"></div>
<svg class="i" style="left:-12px;top:348px;" width="16" height="16" viewBox="0 0 16 16"><use href="#ic_lcsv"/></svg>
<div class="t" style="left:6px;top:350px;font-size:13px;letter-spacing:-0.966px;">tolls_gps_2024.02.13_63870.csv</div>
<div class="t" style="left:380px;top:350px;font-size:13px;letter-spacing:-2.000px;">1</div>
<div class="t" style="left:390px;top:350px;font-size:13px;letter-spacing:-0.900px;transform:scaleX(0.8609);transform-origin:1px 0;">KB</div>
<div class="t ty" style="left:417px;top:350px;">Microsoft Excel C...</div>
<div class="t dt" style="left:538px;top:350px;">3/8/2024  9:42:52 AM</div>
<svg class="i" style="left:-12px;top:367px;" width="16" height="16" viewBox="0 0 16 16"><use href="#ic_lcsv"/></svg>
<div class="t" style="left:6px;top:369px;font-size:13px;letter-spacing:-0.966px;">tolls_gps_2024.02.14_63870.csv</div>
<div class="t" style="left:380px;top:369px;font-size:13px;letter-spacing:-2.000px;">1</div>
<div class="t" style="left:390px;top:369px;font-size:13px;letter-spacing:-0.900px;transform:scaleX(0.8609);transform-origin:1px 0;">KB</div>
<div class="t ty" style="left:417px;top:369px;">Microsoft Excel C...</div>
<div class="t dt" style="left:538px;top:369px;">3/8/2024  9:42:52 AM</div>
<svg class="i" style="left:-12px;top:386px;" width="16" height="16" viewBox="0 0 16 16"><use href="#ic_lcsv"/></svg>
<div class="t" style="left:6px;top:388px;font-size:13px;letter-spacing:-0.892px;">tolls_gps_Invalid_2024.02.01_63870.csv</div>
<div class="t" style="left:380px;top:388px;font-size:13px;letter-spacing:-2.000px;">1</div>
<div class="t" style="left:390px;top:388px;font-size:13px;letter-spacing:-0.900px;transform:scaleX(0.8609);transform-origin:1px 0;">KB</div>
<div class="t ty" style="left:417px;top:388px;">Microsoft Excel C...</div>
<div class="t dt" style="left:538px;top:388px;">3/8/2024  9:42:52 AM</div>
<svg class="i" style="left:-12px;top:406px;" width="16" height="16" viewBox="0 0 16 16"><use href="#ic_lcsv"/></svg>
<div class="t" style="left:6px;top:408px;font-size:13px;letter-spacing:-0.892px;">tolls_gps_Invalid_2024.02.05_63870.csv</div>
<div class="t" style="left:380px;top:408px;font-size:13px;letter-spacing:-2.000px;">1</div>
<div class="t" style="left:390px;top:408px;font-size:13px;letter-spacing:-0.900px;transform:scaleX(0.8609);transform-origin:1px 0;">KB</div>
<div class="t ty" style="left:417px;top:408px;">Microsoft Excel C...</div>
<div class="t dt" style="left:538px;top:408px;">3/8/2024  9:42:52 AM</div>
<svg class="i" style="left:-12px;top:425px;" width="16" height="16" viewBox="0 0 16 16"><use href="#ic_lcsv"/></svg>
<div class="t" style="left:6px;top:427px;font-size:13px;letter-spacing:-0.892px;">tolls_gps_Invalid_2024.02.13_63870.csv</div>
<div class="t" style="left:380px;top:427px;font-size:13px;letter-spacing:-2.000px;">1</div>
<div class="t" style="left:390px;top:427px;font-size:13px;letter-spacing:-0.900px;transform:scaleX(0.8609);transform-origin:1px 0;">KB</div>
<div class="t ty" style="left:417px;top:427px;">Microsoft Excel C...</div>
<div class="t dt" style="left:538px;top:427px;">3/8/2024  9:42:52 AM</div>
<svg class="i" style="left:-12px;top:444px;" width="16" height="16" viewBox="0 0 16 16"><use href="#ic_lcsv"/></svg>
<div class="t" style="left:6px;top:446px;font-size:13px;letter-spacing:-0.892px;">tolls_gps_Invalid_2024.02.14_63870.csv</div>
<div class="t" style="left:380px;top:446px;font-size:13px;letter-spacing:-2.000px;">1</div>
<div class="t" style="left:390px;top:446px;font-size:13px;letter-spacing:-0.900px;transform:scaleX(0.8609);transform-origin:1px 0;">KB</div>
<div class="t ty" style="left:417px;top:446px;">Microsoft Excel C...</div>
<div class="t dt" style="left:538px;top:446px;">3/8/2024  9:42:52 AM</div>
<div class="b" style="left:955px;top:146px;width:809px;height:572px;background:#fff"></div>
<div class="b" style="left:955px;top:146px;width:809px;height:21px;background:#bfcddb"></div>
<div class="b" style="left:955px;top:167px;width:809px;height:1px;background:#8c96a0"></div>
<div class="b" style="left:955px;top:167px;width:1px;height:551px;background:#8c96a0"></div>
<div class="b" style="left:1763px;top:167px;width:1px;height:551px;background:#8c96a0"></div>
<div class="t" style="left:960px;top:150px;font-size:14px">/</div>
<div class="b" style="left:1349px;top:169px;width:1px;height:23px;background:#e5e5e5"></div>
<div class="b" style="left:1349px;top:192px;width:1px;height:526px;background:#e9f2fd"></div>
<div class="b" style="left:1420px;top:169px;width:1px;height:23px;background:#e5e5e5"></div>
<div class="b" style="left:1420px;top:192px;width:1px;height:526px;background:#e9f2fd"></div>
<div class="b" style="left:1572px;top:169px;width:1px;height:23px;background:#e5e5e5"></div>
<div class="b" style="left:1572px;top:192px;width:1px;height:526px;background:#e9f2fd"></div>
<div class="b" style="left:1652px;top:169px;width:1px;height:23px;background:#e5e5e5"></div>
<div class="b" style="left:1652px;top:192px;width:1px;height:526px;background:#e9f2fd"></div>
<div class="b" style="left:1714px;top:169px;width:1px;height:23px;background:#e5e5e5"></div>
<div class="b" style="left:1714px;top:192px;width:1px;height:526px;background:#e9f2fd"></div>
<div class="b" style="left:958px;top:192px;width:1px;height:526px;background:#cfe2f7"></div>
<div class="t" style="left:963px;top:174px;font-size:13px;letter-spacing:-0.333px;">Name</div>
<svg class="i" style="left:1149px;top:168px" width="10" height="6" viewBox="0 0 10 6"><path d="M1 5L4.5 1.5L8 5" stroke="#444" stroke-width="1" fill="none"/></svg>
<div class="t" style="left:1394px;top:174px;font-size:13px;letter-spacing:-1.000px;">Size</div>
<div class="t" style="left:1426px;top:174px;font-size:13px;letter-spacing:-0.333px;">Changed</div>
<div class="t" style="left:1578px;top:174px;font-size:13px;letter-spacing:-0.200px;">Rights</div>
<div class="t" style="left:1659px;top:174px;font-size:13px;letter-spacing:-0.500px;">Owner</div>
<svg class="i" style="left:961px;top:193px;" width="16" height="16" viewBox="0 0 16 16"><use href="#ic_folderup"/></svg>
<div class="t" style="left:978px;top:196px;font-size:13px;letter-spacing:0.000px;">..</div>
<div class="t dt" style="left:1426px;top:196px;">2/2/2024 6:22:56 AM</div>
<div class="t rt" style="left:1578px;top:196px;">rwxr-x---</div>
<svg class="i" style="left:961px;top:213px;" width="16" height="16" viewBox="0 0 16 16"><use href="#ic_folder"/></svg>
<div class="t" style="left:978px;top:216px;font-size:13px;letter-spacing:-0.571px;">Rejected</div>
<div class="t dt" style="left:1426px;top:216px;">2/15/2024 8:22:56 PM</div>
<div class="t rt" style="left:1578px;top:216px;">rwxr-x---</div>
<svg class="i" style="left:961px;top:233px;" width="16" height="16" viewBox="0 0 16 16"><use href="#ic_xls"/></svg>
<div class="t" style="left:978px;top:235px;font-size:13px;letter-spacing:-1.043px;">2024.01.31_63870_gps.csv</div>
<div class="t" style="left:1389px;top:235px;font-size:13px;letter-spacing:-2.000px;">1</div>
<div class="t" style="left:1399px;top:235px;font-size:13px;letter-spacing:-0.900px;transform:scaleX(0.8609);transform-origin:1px 0;">KB</div>
<div class="t dt" style="left:1426px;top:235px;">1/31/2024 3:35:59 PM</div>
<div class="t rt" style="left:1578px;top:235px;">rwxr-x---</div>
<svg class="i" style="left:961px;top:252px;" width="16" height="16" viewBox="0 0 16 16"><use href="#ic_xls"/></svg>
<div class="t" style="left:978px;top:254px;font-size:13px;letter-spacing:-0.935px;">Invalid_2024.01.31_63870_gps.csv</div>
<div class="t" style="left:1389px;top:254px;font-size:13px;letter-spacing:-2.000px;">1</div>
<div class="t" style="left:1399px;top:254px;font-size:13px;letter-spacing:-0.900px;transform:scaleX(0.8609);transform-origin:1px 0;">KB</div>
<div class="t dt" style="left:1426px;top:254px;">2/1/2024 3:16:09 PM</div>
<div class="t rt" style="left:1578px;top:254px;">rwxr-x---</div>
<svg class="i" style="left:961px;top:271px;" width="16" height="16" viewBox="0 0 16 16"><use href="#ic_txt"/></svg>
<div class="t" style="left:979px;top:273px;font-size:13px;letter-spacing:-0.860px;">success-tolls_gps_2024.02.04_63870-2024.02.09.05.53.00.txt</div>
<div class="t" style="left:1389px;top:273px;font-size:13px;letter-spacing:-2.000px;">1</div>
<div class="t" style="left:1399px;top:273px;font-size:13px;letter-spacing:-0.900px;transform:scaleX(0.8609);transform-origin:1px 0;">KB</div>
<div class="t dt" style="left:1426px;top:273px;">2/9/2024 3:53:00 AM</div>
<div class="t rt" style="left:1578px;top:273px;">rwxr-x---</div>
<svg class="i" style="left:961px;top:290px;" width="16" height="16" viewBox="0 0 16 16"><use href="#ic_txt"/></svg>
<div class="t" style="left:979px;top:292px;font-size:13px;letter-spacing:-0.860px;">success-tolls_gps_2024.02.04_63870-2024.02.13.10.30.00.txt</div>
<div class="t" style="left:1389px;top:292px;font-size:13px;letter-spacing:-2.000px;">1</div>
<div class="t" style="left:1399px;top:292px;font-size:13px;letter-spacing:-0.900px;transform:scaleX(0.8609);transform-origin:1px 0;">KB</div>
<div class="t dt" style="left:1426px;top:292px;">2/13/2024 8:30:00 AM</div>
<div class="t rt" style="left:1578px;top:292px;">rwxr-x---</div>
<svg class="i" style="left:961px;top:310px;" width="16" height="16" viewBox="0 0 16 16"><use href="#ic_txt"/></svg>
<div class="t" style="left:979px;top:312px;font-size:13px;letter-spacing:-0.860px;">success-tolls_gps_2024.02.13_63870-2024.02.13.10.38.00.txt</div>
<div class="t" style="left:1389px;top:312px;font-size:13px;letter-spacing:-2.000px;">1</div>
<div class="t" style="left:1399px;top:312px;font-size:13px;letter-spacing:-0.900px;transform:scaleX(0.8609);transform-origin:1px 0;">KB</div>
<div class="t dt" style="left:1426px;top:312px;">2/13/2024 8:38:00 AM</div>
<div class="t rt" style="left:1578px;top:312px;">rwxr-x---</div>
<svg class="i" style="left:970px;top:320px" width="330" height="32" viewBox="0 0 330 32"><path d="M9.0 16.0 C11.2 15.3 16.5 14.2 20.0 13.6 C23.5 13.0 20.0 13.1 30.0 12.5 C40.0 11.9 63.3 10.7 80.0 10.1 C96.7 9.6 115.0 9.4 130.0 9.2 C145.0 8.9 161.7 8.9 170.0 8.6 C178.3 8.3 176.7 7.6 180.0 7.2 C183.3 6.7 181.7 6.1 190.0 5.9 C198.3 5.6 217.5 5.3 230.0 5.7 C242.5 6.1 255.0 7.9 265.0 8.2 C275.0 8.5 280.8 7.8 290.0 7.6 C299.2 7.4 314.3 7.1 320.0 7.2 C325.7 7.3 323.1 7.6 324.0 8.2 C324.9 8.8 325.4 9.5 325.6 11.0 C325.8 12.5 325.6 15.6 325.4 17.0 C325.2 18.4 325.5 19.0 324.6 19.6 C323.7 20.2 327.4 20.2 320.0 20.6 C312.6 21.0 295.0 22.0 280.0 22.0 C265.0 22.0 248.3 21.0 230.0 20.9 C211.7 20.8 186.7 21.2 170.0 21.6 C153.3 22.0 145.0 22.5 130.0 23.1 C115.0 23.7 96.7 24.5 80.0 25.1 C63.3 25.7 41.8 26.2 30.0 26.5 C18.2 26.8 12.8 27.4 9.0 27.2 C5.2 26.9 7.4 26.5 7.0 25.0 C6.6 23.5 6.3 19.5 6.6 18.0 C6.9 16.5 6.8 16.7 9.0 16.0Z" fill="#ffe600"/></svg>
<svg class="i" style="left:961px;top:329px;" width="16" height="16" viewBox="0 0 16 16"><use href="#ic_txt"/></svg>
<div class="t" style="left:979px;top:331px;font-size:13px;letter-spacing:-0.860px;">success-tolls_gps_2024.02.13_63870-2024.02.14.08.39.00.txt</div>
<div class="t" style="left:1389px;top:331px;font-size:13px;letter-spacing:-2.000px;">1</div>
<div class="t" style="left:1399px;top:331px;font-size:13px;letter-spacing:-0.900px;transform:scaleX(0.8609);transform-origin:1px 0;">KB</div>
<div class="t dt" style="left:1426px;top:331px;">2/14/2024 6:39:00 AM</div>
<div class="t rt" style="left:1578px;top:331px;">rwxr-x---</div>
<svg class="i" style="left:961px;top:348px;" width="16" height="16" viewBox="0 0 16 16"><use href="#ic_txt"/></svg>
<div class="t" style="left:979px;top:350px;font-size:13px;letter-spacing:-0.860px;">success-tolls_gps_2024.02.14_63870-2024.02.15.06.15.03.txt</div>
<div class="t" style="left:1389px;top:350px;font-size:13px;letter-spacing:-2.000px;">1</div>
<div class="t" style="left:1399px;top:350px;font-size:13px;letter-spacing:-0.900px;transform:scaleX(0.8609);transform-origin:1px 0;">KB</div>
<div class="t dt" style="left:1426px;top:350px;">2/15/2024 4:15:03 AM</div>
<div class="t rt" style="left:1578px;top:350px;">rwxr-x---</div>
<svg class="i" style="left:961px;top:367px;" width="16" height="16" viewBox="0 0 16 16"><use href="#ic_txt"/></svg>
<div class="t" style="left:979px;top:369px;font-size:13px;letter-spacing:-0.860px;">success-tolls_gps_2024.02.14_63870-2024.03.08.04.45.00.txt</div>
<div class="t" style="left:1389px;top:369px;font-size:13px;letter-spacing:-2.000px;">1</div>
<div class="t" style="left:1399px;top:369px;font-size:13px;letter-spacing:-0.900px;transform:scaleX(0.8609);transform-origin:1px 0;">KB</div>
<div class="t dt" style="left:1426px;top:369px;">3/8/2024 2:45:00 AM</div>
<div class="t rt" style="left:1578px;top:369px;">rwxr-x---</div>
<svg class="i" style="left:961px;top:386px;" width="16" height="16" viewBox="0 0 16 16"><use href="#ic_txt"/></svg>
<div class="t" style="left:979px;top:388px;font-size:13px;letter-spacing:-0.869px;">success-tolls_gps_2024.03.06_63870_gps-2024.03.07.07.18.20.txt</div>
<div class="t" style="left:1389px;top:388px;font-size:13px;letter-spacing:-2.000px;">1</div>
<div class="t" style="left:1399px;top:388px;font-size:13px;letter-spacing:-0.900px;transform:scaleX(0.8609);transform-origin:1px 0;">KB</div>
<div class="t dt" style="left:1426px;top:388px;">3/7/2024 5:18:20 AM</div>
<div class="t rt" style="left:1578px;top:388px;">rwxr-x---</div>
<svg class="i" style="left:961px;top:406px;" width="16" height="16" viewBox="0 0 16 16"><use href="#ic_txt"/></svg>
<div class="t" style="left:979px;top:408px;font-size:13px;letter-spacing:-0.917px;">success-tolls_gps_AS_2024.02.09_63870-2024.02.09.06.04.03.txt</div>
<div class="t" style="left:1389px;top:408px;font-size:13px;letter-spacing:-2.000px;">1</div>
<div class="t" style="left:1399px;top:408px;font-size:13px;letter-spacing:-0.900px;transform:scaleX(0.8609);transform-origin:1px 0;">KB</div>
<div class="t dt" style="left:1426px;top:408px;">2/9/2024 4:04:03 AM</div>
<div class="t rt" style="left:1578px;top:408px;">rwxr-x---</div>
<svg class="i" style="left:961px;top:425px;" width="16" height="16" viewBox="0 0 16 16"><use href="#ic_txt"/></svg>
<div class="t" style="left:979px;top:427px;font-size:13px;letter-spacing:-0.918px;">success-tolls_gps_AS1_2024.02.09_63870-2024.02.09.06.24.00.txt</div>
<div class="t" style="left:1389px;top:427px;font-size:13px;letter-spacing:-2.000px;">1</div>
<div class="t" style="left:1399px;top:427px;font-size:13px;letter-spacing:-0.900px;transform:scaleX(0.8609);transform-origin:1px 0;">KB</div>
<div class="t dt" style="left:1426px;top:427px;">2/9/2024 4:24:00 AM</div>
<div class="t rt" style="left:1578px;top:427px;">rwxr-x---</div>
<svg class="i" style="left:961px;top:444px;" width="16" height="16" viewBox="0 0 16 16"><use href="#ic_txt"/></svg>
<div class="t" style="left:979px;top:446px;font-size:13px;letter-spacing:-0.918px;">success-tolls_gps_AS1_2024.02.12_63870-2024.02.12.01.48.00.txt</div>
<div class="t" style="left:1389px;top:446px;font-size:13px;letter-spacing:-2.000px;">1</div>
<div class="t" style="left:1399px;top:446px;font-size:13px;letter-spacing:-0.900px;transform:scaleX(0.8609);transform-origin:1px 0;">KB</div>
<div class="t dt" style="left:1426px;top:446px;">2/11/2024 11:48:00 PM</div>
<div class="t rt" style="left:1578px;top:446px;">rwxr-x---</div>
<svg class="i" style="left:961px;top:463px;" width="16" height="16" viewBox="0 0 16 16"><use href="#ic_txt"/></svg>
<div class="t" style="left:979px;top:465px;font-size:13px;letter-spacing:-0.918px;">success-tolls_gps_AS1_2024.02.12_63870-2024.02.12.05.03.00.txt</div>
<div class="t" style="left:1389px;top:465px;font-size:13px;letter-spacing:-2.000px;">1</div>
<div class="t" style="left:1399px;top:465px;font-size:13px;letter-spacing:-0.900px;transform:scaleX(0.8609);transform-origin:1px 0;">KB</div>
<div class="t dt" style="left:1426px;top:465px;">2/12/2024 3:03:00 AM</div>
<div class="t rt" style="left:1578px;top:465px;">rwxr-x---</div>
<svg class="i" style="left:961px;top:482px;" width="16" height="16" viewBox="0 0 16 16"><use href="#ic_txt"/></svg>
<div class="t" style="left:979px;top:484px;font-size:13px;letter-spacing:-0.918px;">success-tolls_gps_AS1_2024.02.12_63870-2024.02.12.05.44.00.txt</div>
<div class="t" style="left:1389px;top:484px;font-size:13px;letter-spacing:-2.000px;">1</div>
<div class="t" style="left:1399px;top:484px;font-size:13px;letter-spacing:-0.900px;transform:scaleX(0.8609);transform-origin:1px 0;">KB</div>
<div class="t dt" style="left:1426px;top:484px;">2/12/2024 3:44:00 AM</div>
<div class="t rt" style="left:1578px;top:484px;">rwxr-x---</div>
<svg class="i" style="left:961px;top:502px;" width="16" height="16" viewBox="0 0 16 16"><use href="#ic_txt"/></svg>
<div class="t" style="left:979px;top:504px;font-size:13px;letter-spacing:-0.836px;">success-tolls_gps_testToday_2024.03.07_63870-2024.03.07.07.18.22.txt</div>
<div class="t" style="left:1389px;top:504px;font-size:13px;letter-spacing:-2.000px;">1</div>
<div class="t" style="left:1399px;top:504px;font-size:13px;letter-spacing:-0.900px;transform:scaleX(0.8609);transform-origin:1px 0;">KB</div>
<div class="t dt" style="left:1426px;top:504px;">3/7/2024 5:18:22 AM</div>
<div class="t rt" style="left:1578px;top:504px;">rwxr-x---</div>
<svg class="i" style="left:961px;top:521px;" width="16" height="16" viewBox="0 0 16 16"><use href="#ic_txt"/></svg>
<div class="t" style="left:979px;top:523px;font-size:13px;letter-spacing:-0.200px;">testing.txt</div>
<div class="t" style="left:1390px;top:523px;font-size:13px;letter-spacing:-1.000px;">0</div>
<div class="t" style="left:1399px;top:523px;font-size:13px;letter-spacing:-0.900px;transform:scaleX(0.8609);transform-origin:1px 0;">KB</div>
<div class="t dt" style="left:1426px;top:523px;">2/2/2024 6:23:15 AM</div>
<div class="t rt" style="left:1578px;top:523px;">rwxr-x---</div>
</body></html>
